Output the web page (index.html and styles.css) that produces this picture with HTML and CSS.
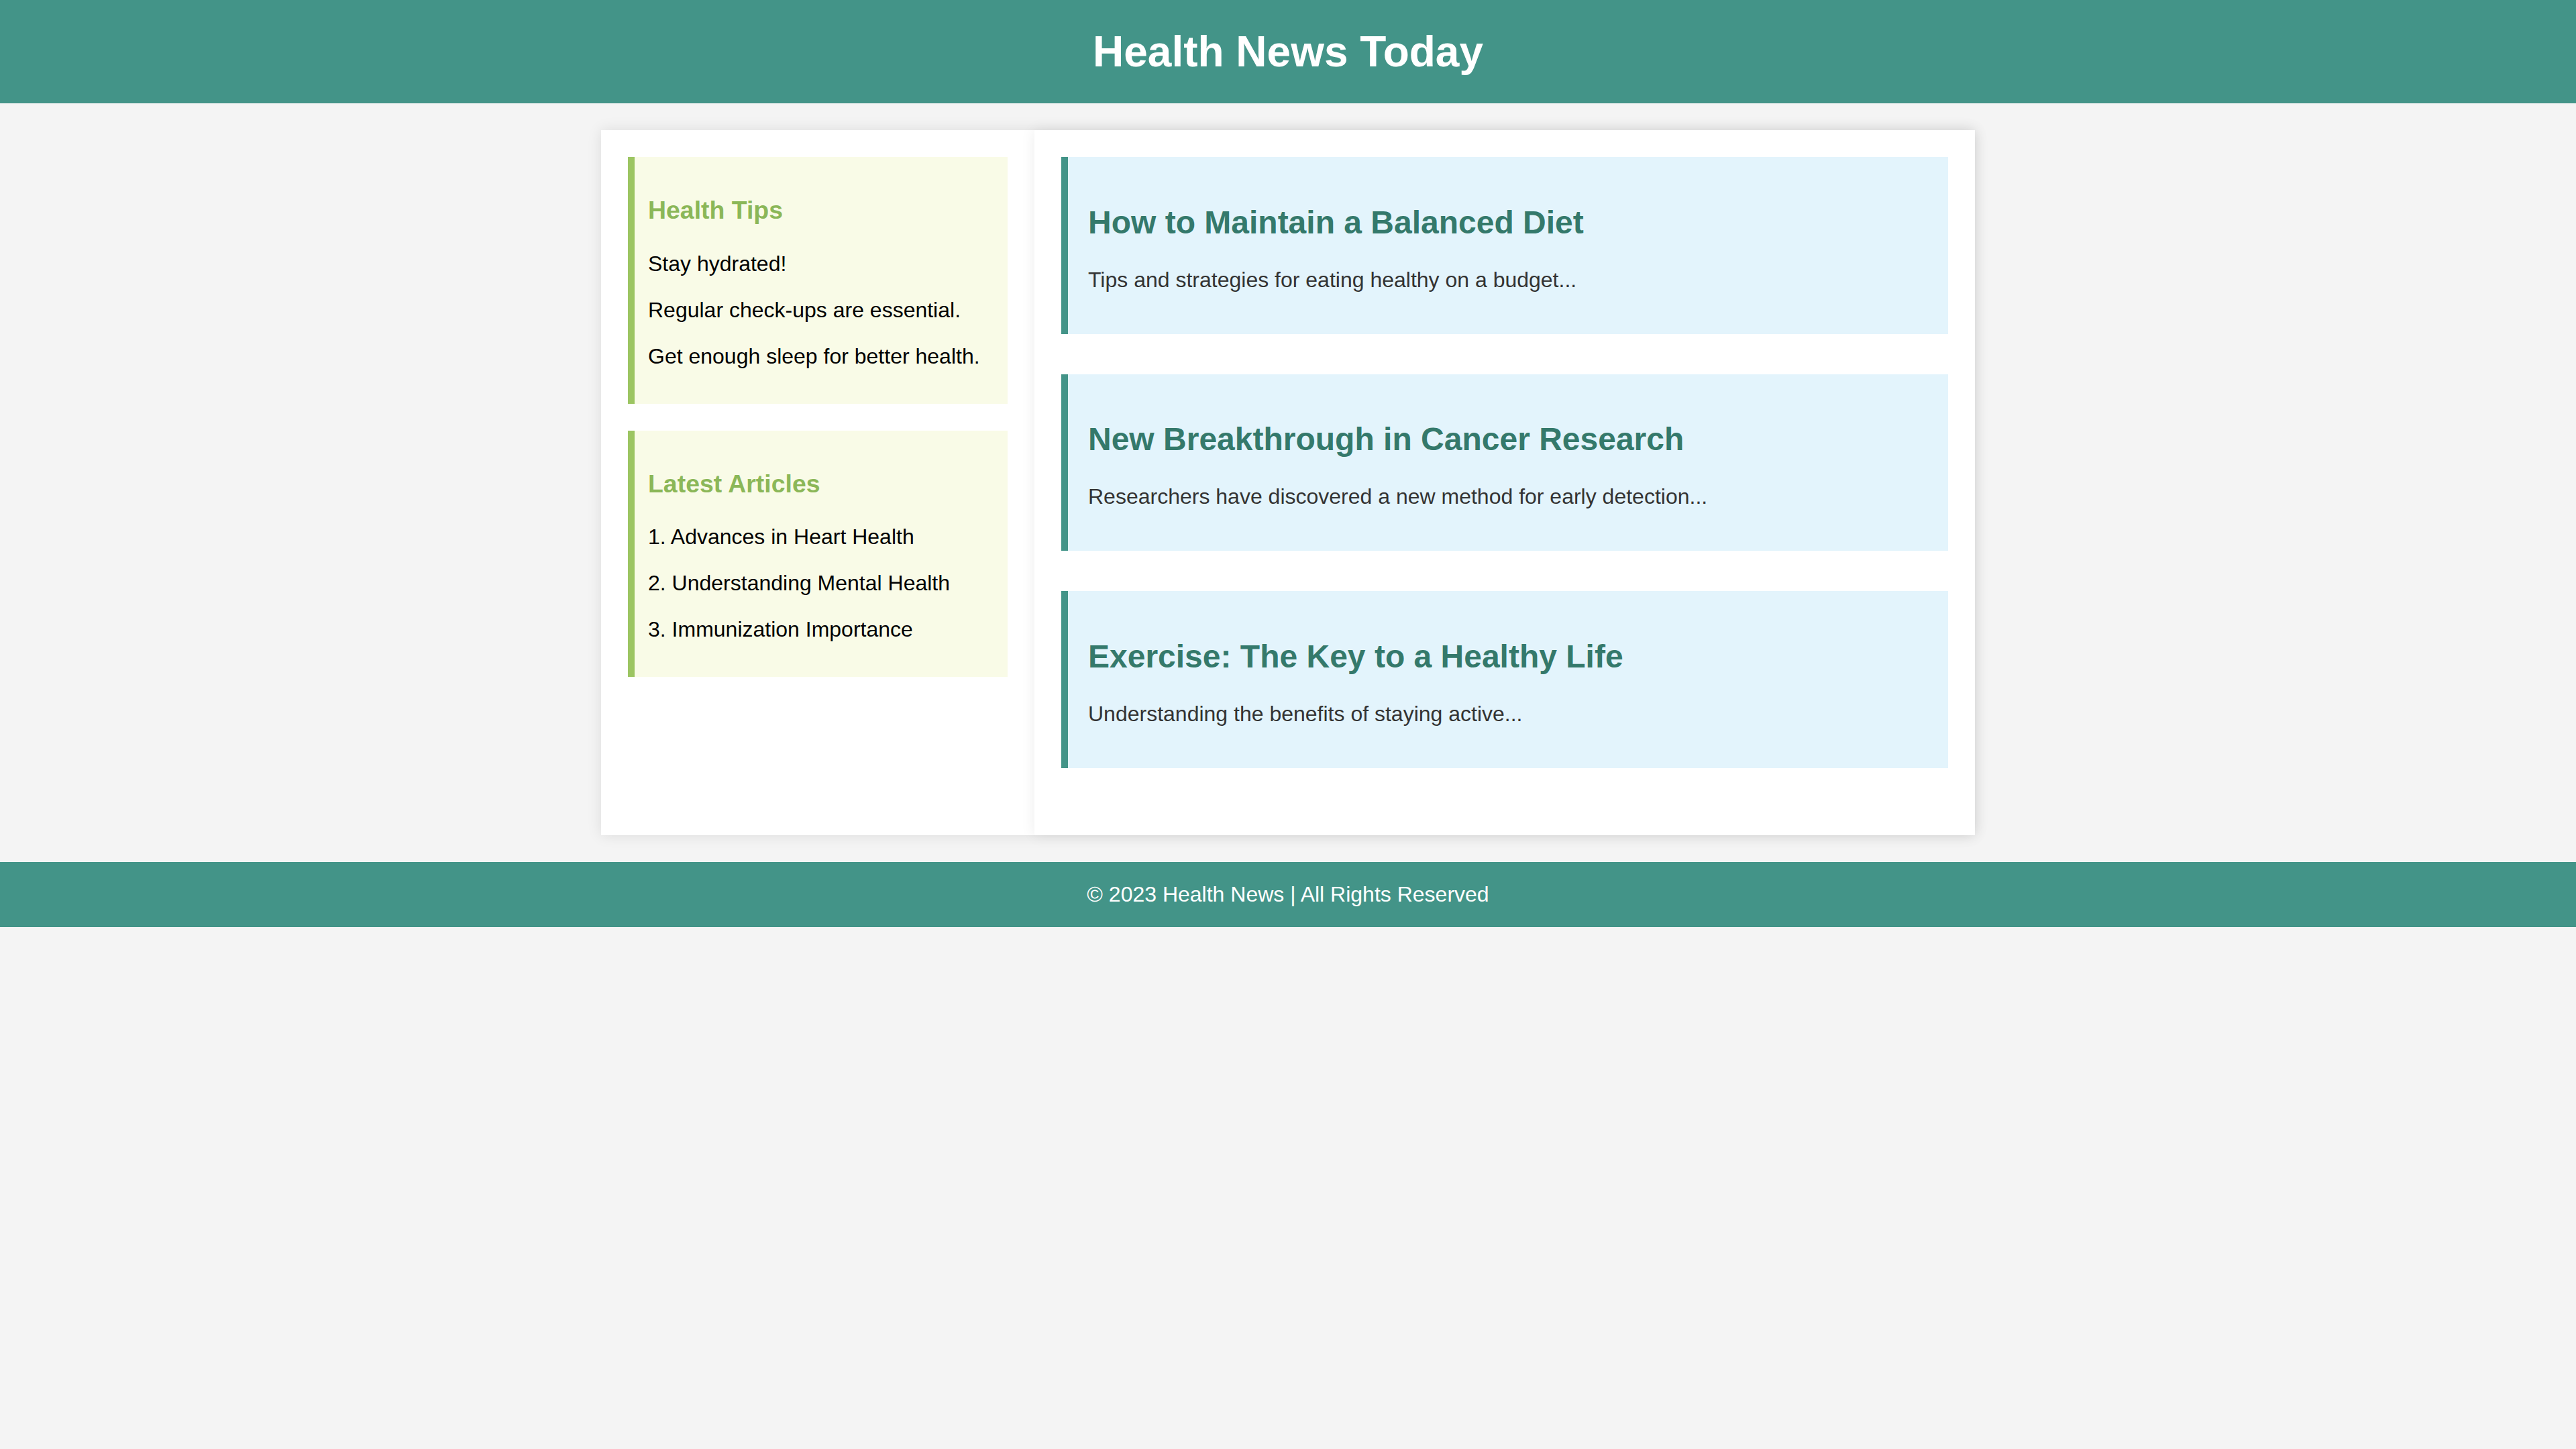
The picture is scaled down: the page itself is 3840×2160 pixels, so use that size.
FILE: index.html
```html
<!DOCTYPE html>
<html lang="en">
<head>
<meta charset="utf-8">
<title>Health News Today</title>
<link rel="stylesheet" href="styles.css">
</head>
<body>
<header class="site-header">
  <h1 class="site-title">Health News Today</h1>
</header>
<div class="container">
  <aside class="sidebar">
    <section class="widget">
      <h3 class="widget-title">Health Tips</h3>
      <p>Stay hydrated!</p>
      <p>Regular check-ups are essential.</p>
      <p>Get enough sleep for better health.</p>
    </section>
    <section class="widget">
      <h3 class="widget-title">Latest Articles</h3>
      <p>1. Advances in Heart Health</p>
      <p>2. Understanding Mental Health</p>
      <p>3. Immunization Importance</p>
    </section>
  </aside>
  <main class="main">
    <article class="article">
      <h2 class="article-title">How to Maintain a Balanced Diet</h2>
      <p class="article-text">Tips and strategies for eating healthy on a budget...</p>
    </article>
    <article class="article">
      <h2 class="article-title">New Breakthrough in Cancer Research</h2>
      <p class="article-text">Researchers have discovered a new method for early detection...</p>
    </article>
    <article class="article">
      <h2 class="article-title">Exercise: The Key to a Healthy Life</h2>
      <p class="article-text">Understanding the benefits of staying active...</p>
    </article>
  </main>
</div>
<footer class="site-footer">
  <p class="footer-text">© 2023 Health News | All Rights Reserved</p>
</footer>
</body>
</html>
```

FILE: styles.css
```css
html, body {
  margin: 0;
  padding: 0;
}
body {
  background: #f4f4f4;
  font-family: "Liberation Sans", Arial, sans-serif;
  font-size: 32px;
  color: #000;
}
.site-header {
  background: #439488;
  color: #fff;
  padding: 40px;
  text-align: center;
}
.site-title {
  margin: 0;
  font-size: 64px;
  font-weight: bold;
}
.container {
  width: 2048px;
  margin: 40px auto;
  display: flex;
  background: #fff;
  box-shadow: 0 0 20px rgba(0, 0, 0, 0.1);
}
.sidebar {
  width: 646px;
  flex: none;
  padding: 40px;
  box-sizing: border-box;
}
.widget {
  background: #f9fbe7;
  border-left: 10px solid #9cc562;
  padding: 20px;
  margin-bottom: 40px;
}
.widget-title {
  color: #8bb758;
  font-size: 37.44px;
  margin: 38px 0 39.5px;
}
.widget p {
  margin: 32px 0;
}
.main {
  flex: 1;
  padding: 40px;
  box-shadow: 0 0 20px rgba(0, 0, 0, 0.08);
  position: relative;
}
.article {
  background: #e3f4fc;
  border-left: 10px solid #439488;
  padding: 30px;
  margin-bottom: 60px;
}
.article-title {
  color: #34796b;
  font-size: 48px;
  margin: 39.84px 0;
}
.article-text {
  color: #333;
  margin: 32px 0;
}
.site-footer {
  background: #439488;
  color: #fff;
  text-align: center;
  padding: 30px;
}
.footer-text {
  margin: 0;
}
```
